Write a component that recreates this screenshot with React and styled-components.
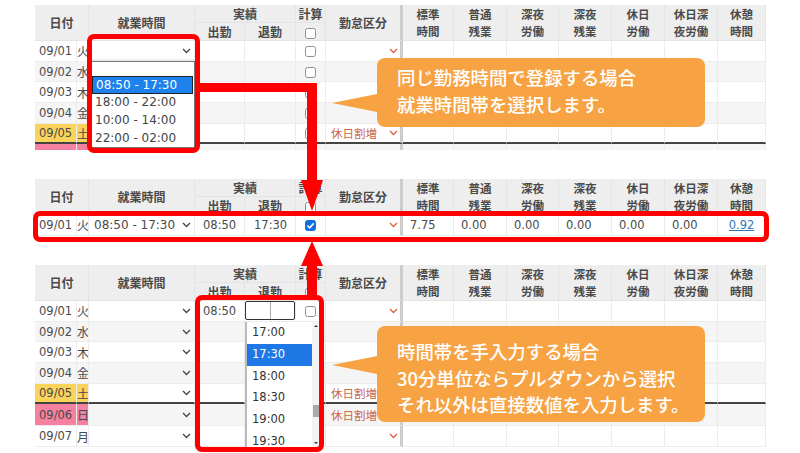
import React from "react";
import styled, { createGlobalStyle } from "styled-components";

const Global = createGlobalStyle`
  html, body { margin: 0; padding: 0; background: #fff; }
  body { width: 800px; height: 453px; overflow: hidden; font-family: "DejaVu Sans", "Noto Sans CJK JP", sans-serif; }
`;

const Page = styled.div`
  position: relative;
  width: 800px;
  height: 453px;
  padding: 5px 0 0 35px;
  box-sizing: border-box;
  overflow: hidden;
  display: flex;
  flex-direction: column;
`;

const Clip = styled.section`
  width: 731px;
  height: ${(p) => p.$h}px;
  margin-top: ${(p) => p.$top}px;
  overflow: hidden;
  flex: none;
`;

const Table = styled.table`
  width: 731px;
  table-layout: fixed;
  border-collapse: separate;
  border-spacing: 0;
  color: #4a4a4a;
  font-size: 11.5px;
`;

const Th = styled.th`
  height: ${(p) => (p.$low ? 17.5 : 18)}px;
  padding: 0;
  box-sizing: border-box;
  background: #eee;
  border-right: ${(p) => (p.$sep ? "3px solid #ccc" : "1px solid #e4e4e4")};
  border-bottom: 1px solid #e4e4e4;
  font-family: "Noto Sans CJK JP", sans-serif;
  font-size: ${(p) => (p.$small ? 11.5 : 12)}px;
  line-height: 17px;
  font-weight: 700;
  color: #4a4a4a;
  text-align: center;
  vertical-align: middle;
  overflow: hidden;
  white-space: nowrap;
`;

const Tr = styled.tr`
  background: ${(p) => (p.$alt ? "#f5f5f5" : "#fff")};
`;

const Td = styled.td`
  height: ${(p) => (p.$tall ? 22 : 20.7)}px;
  padding: ${(p) => (p.$center ? "0" : `0 0 0 ${p.$pl ?? 8}px`)};
  box-sizing: border-box;
  border-right: ${(p) => (p.$sep ? "3px solid #ccc" : "1px solid #ececec")};
  border-bottom: ${(p) => (p.$week ? "2px solid #444" : "1px solid #ececec")};
  text-align: ${(p) => (p.$center ? "center" : "left")};
  white-space: nowrap;
  overflow: hidden;
  position: relative;
`;

const DateTd = styled(Td)`
  padding-left: 4px;
  background: ${(p) => p.$tone || "transparent"};
`;

const DayTd = styled(Td)`
  padding: 0;
  background: ${(p) => p.$tone || "transparent"};
  font-family: "Noto Sans CJK JP", sans-serif;
  font-size: 12px;
`;

const SelectBox = styled.div`
  display: flex;
  align-items: center;
  justify-content: space-between;
  padding-right: ${(p) => p.$pr ?? 3}px;
  min-height: 14px;
`;

const SelectCell = styled(Td)`
  padding-left: 5px;
  font-size: 12px;
`;

const Label = styled.span`
  font-family: "Noto Sans CJK JP", sans-serif;
  font-size: 11.5px;
  color: #c8694a;
`;

const Check = styled.span`
  display: inline-block;
  vertical-align: middle;
  width: 11px;
  height: 11px;
  box-sizing: border-box;
  border-radius: 2.5px;
  border: 1px solid ${(p) => (p.$on ? "#0f6fe0" : "#8f8f8f")};
  background: ${(p) => (p.$on ? "#0f6fe0" : "#fff")};
  position: relative;
`;

const Link = styled.a`
  color: #2f77bd;
  text-decoration: underline;
`;

const TimeEdit = styled.div`
  position: absolute;
  left: 0;
  top: 0;
  width: 50px;
  height: 19px;
  box-sizing: border-box;
  border: 1px solid #333;
  border-radius: 2px;
  background: #fff;
  display: flex;
`;

const TimePart = styled.span`
  flex: 1;
  & + & { border-left: 1px solid #aaa; }
`;

const Frame = styled.div`
  position: absolute;
  left: ${(p) => p.$x}px;
  top: ${(p) => p.$y}px;
  width: ${(p) => p.$w}px;
  height: ${(p) => p.$h}px;
  box-sizing: border-box;
  border: 5px solid #f00;
  border-radius: 7px;
  pointer-events: none;
  z-index: 4;
`;

const Arrows = styled.svg`
  position: absolute;
  left: 0;
  top: 0;
  z-index: 3;
`;

const List = styled.div`
  position: absolute;
  left: 90px;
  top: 61px;
  width: 105px;
  height: 87px;
  box-sizing: border-box;
  padding: 0 1px;
  background: #fff;
  border: 1px solid #777;
  box-shadow: 0 -1px 2px rgba(0, 0, 0, 0.15);
  z-index: 2;
  font-size: 12px;
  color: #444;
`;

const ListBlank = styled.div`
  height: 14px;
`;

const ListItem = styled.div`
  height: ${(p) => (p.$sel ? 18 : 17.8)}px;
  line-height: 16px;
  padding-left: 3px;
  box-sizing: border-box;
  white-space: nowrap;
  background: ${(p) => (p.$sel ? "#1e82ee" : "transparent")};
  color: ${(p) => (p.$sel ? "#fff" : "#444")};
  border: ${(p) => (p.$sel ? "1px solid #222" : "none")};
`;

const TimeList = styled.div`
  position: absolute;
  left: 245px;
  top: 322px;
  width: 74px;
  height: 125px;
  box-sizing: border-box;
  overflow: hidden;
  background: #fff;
  border-left: 2px solid #bbb;
  z-index: 2;
  font-size: 11.5px;
  color: #444;
`;

const TimeItem = styled.div`
  width: 65px;
  height: 21.8px;
  line-height: 21.8px;
  padding-left: 5px;
  box-sizing: border-box;
  background: ${(p) => (p.$sel ? "#1e78e6" : "transparent")};
  color: ${(p) => (p.$sel ? "#fff" : "#333")};
`;

const ScrollTrack = styled.div`
  position: absolute;
  right: 0;
  top: 0;
  bottom: 0;
  width: 7px;
  background: #f4f4f4;
`;

const ScrollThumb = styled.div`
  position: absolute;
  right: 0;
  top: 83px;
  width: 6px;
  height: 12px;
  background: #aaa;
`;

const ScrollCaret = styled.div`
  position: absolute;
  right: 1px;
  ${(p) => (p.$down ? "bottom: 3px" : "top: 3px")};
  width: 0;
  height: 0;
  border-left: 2px solid transparent;
  border-right: 2px solid transparent;
  ${(p) => (p.$down ? "border-top: 2px solid #333" : "border-bottom: 2px solid #333")};
`;

const Callout = styled.div`
  position: absolute;
  left: 377px;
  top: ${(p) => p.$y}px;
  width: 328px;
  height: ${(p) => p.$h}px;
  box-sizing: border-box;
  padding: ${(p) => p.$pad}px 0 0 20px;
  background: #f7a344;
  border-radius: 8px;
  color: #fff;
  font-family: "Noto Sans CJK JP", sans-serif;
  font-size: 18.4px;
  font-weight: 500;
  line-height: ${(p) => p.$lh}px;
  white-space: nowrap;
  z-index: 5;
  &::before {
    content: "";
    position: absolute;
    left: -45px;
    top: ${(p) => p.$tail}px;
    width: 0;
    height: 0;
    border-right: 45px solid #f7a344;
    border-top: 9px solid transparent;
    border-bottom: 9px solid transparent;
  }
`;

const Chevron = ({ color = "#444", size = 9 }) => (
  <svg width={size} height={6} viewBox="0 0 9 6" fill="none">
    <path d="M1 1l3.5 3.5L8 1" stroke={color} strokeWidth="1.3" />
  </svg>
);

const Tick = () => (
  <svg width="11" height="11" viewBox="0 0 11 11" fill="none" style={{ position: "absolute", left: -1, top: -1 }}>
    <path d="M2.5 5.6l2.2 2.2 4-4.4" stroke="#fff" strokeWidth="1.6" />
  </svg>
);

const COLS = [42, 12, 106, 50, 51, 30, 77, 51, 53, 52, 53, 53, 53, 48];
const RIGHT = [["標準", "時間"], ["普通", "残業"], ["深夜", "労働"], ["深夜", "残業"], ["休日", "労働"], ["休日深", "夜労働"], ["休憩", "時間"]];
const YEL = "#f9d35a";
const PINK = "#f5809f";

const Head = () => (
  <thead>
    <tr>
      <Th colSpan={2} rowSpan={2}>日付</Th>
      <Th rowSpan={2}>就業時間</Th>
      <Th colSpan={2}>実績</Th>
      <Th>計算</Th>
      <Th rowSpan={2} $sep>勤怠区分</Th>
      {RIGHT.map(([a, b]) => (
        <Th key={a + b} rowSpan={2} $small>{a}<br />{b}</Th>
      ))}
    </tr>
    <tr>
      <Th $low>出勤</Th>
      <Th $low>退勤</Th>
      <Th $low><Check /></Th>
    </tr>
  </thead>
);

const Row = ({ d }) => (
  <Tr $alt={d.alt}>
    <DateTd $tone={d.tone} $week={d.week} $tall={d.tall}>{d.date}</DateTd>
    <DayTd $tone={d.tone} $week={d.week}>{d.day}</DayTd>
    <SelectCell $week={d.week}>
      <SelectBox>{d.shift || <span />}<Chevron /></SelectBox>
    </SelectCell>
    <Td $week={d.week}>{d.start}</Td>
    <Td $week={d.week} $pl={d.edit ? 0 : 9}>
      {d.edit ? <TimeEdit><TimePart /><TimePart /></TimeEdit> : d.end}
    </Td>
    <Td $center $week={d.week}>
      <Check $on={d.on}>{d.on && <Tick />}</Check>
    </Td>
    <Td $sep $week={d.week} $pl={5}>
      <SelectBox $pr={2}>
        {d.label ? <Label>{d.label}</Label> : <span />}
        <Chevron color="#d9623a" />
      </SelectBox>
    </Td>
    {(d.nums || Array(6).fill("")).map((n, i) => (
      <Td key={i} $week={d.week} $pl={7}>{n}</Td>
    ))}
    <Td $center $week={d.week}>{d.rest && <Link>{d.rest}</Link>}</Td>
  </Tr>
);

const DayTable = ({ rows }) => (
  <Table>
    <colgroup>
      {COLS.map((w, i) => <col key={i} style={{ width: w }} />)}
    </colgroup>
    <Head />
    <tbody>
      {rows.map((d) => <Row key={d.date} d={d} />)}
    </tbody>
  </Table>
);

const week = [
  { date: "09/01", day: "火" },
  { date: "09/02", day: "水", alt: true },
  { date: "09/03", day: "木" },
  { date: "09/04", day: "金", alt: true },
  { date: "09/05", day: "土", tone: YEL, label: "休日割増", week: true },
  { date: "09/06", day: "日", tone: PINK, label: "休日割増", alt: true, tall: true },
  { date: "09/07", day: "月" },
];

const thirdRows = week.map((d, i) => (i === 0 ? { ...d, start: "08:50", edit: true } : d));

const filled = [{
  date: "09/01", day: "火", shift: "08:50 - 17:30", start: "08:50", end: "17:30", on: true,
  nums: ["7.75", "0.00", "0.00", "0.00", "0.00", "0.00"], rest: "0.92",
}];

export default function App() {
  return (
    <>
      <Global />
      <Page>
        <Clip $top={0} $h={145}><DayTable rows={week.slice(0, 6)} /></Clip>
        <Clip $top={29} $h={58}><DayTable rows={filled} /></Clip>
        <Clip $top={28} $h={183}><DayTable rows={thirdRows} /></Clip>

        <List>
          <ListBlank />
          <ListItem $sel>08:50 - 17:30</ListItem>
          <ListItem>18:00 - 22:00</ListItem>
          <ListItem>10:00 - 14:00</ListItem>
          <ListItem>22:00 - 02:00</ListItem>
        </List>

        <TimeList>
          <TimeItem>17:00</TimeItem>
          <TimeItem $sel>17:30</TimeItem>
          <TimeItem>18:00</TimeItem>
          <TimeItem>18:30</TimeItem>
          <TimeItem>19:00</TimeItem>
          <TimeItem>19:30</TimeItem>
          <ScrollTrack>
            <ScrollCaret />
            <ScrollThumb />
            <ScrollCaret $down />
          </ScrollTrack>
        </TimeList>

        <Arrows width="800" height="453" viewBox="0 0 800 453" aria-hidden="true">
          <path fill="#f00" d="M197 83H317V180H323L312 211L301 180H307V92H197Z" />
          <path fill="#f00" d="M312 241L323 266H317V297H307V266H301Z" />
        </Arrows>

        <Frame $x={87} $y={34} $w={113} $h={119} />
        <Frame $x={33} $y={211} $w={736} $h={31} />
        <Frame $x={195} $y={295} $w={129} $h={157} />

        <Callout $y={58} $h={69} $pad={6} $lh={27} $tail={36}>
          同じ勤務時間で登録する場合<br />就業時間帯を選択します。
        </Callout>
        <Callout $y={326} $h={96} $pad={12} $lh={26.5} $tail={30}>
          時間帯を手入力する場合<br />30分単位ならプルダウンから選択<br />それ以外は直接数値を入力します。
        </Callout>
      </Page>
    </>
  );
}
